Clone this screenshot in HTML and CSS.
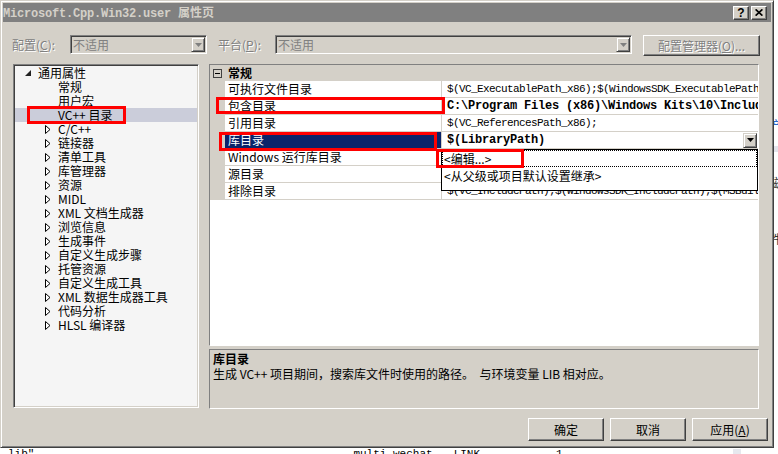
FILE: index.html
```html
<!DOCTYPE html>
<html lang="zh-CN">
<head>
  <meta charset="UTF-8">
  <title>Microsoft.Cpp.Win32.user 属性页</title>
  <link rel="stylesheet" href="styles.css">
</head>
<body>
  <div class="screen">
    <div class="dialog">
      <div class="titlebar">
        <span class="title"><span class="mono-b">Microsoft.Cpp.Win32.user </span>属性页</span>
        <span class="caption-btns">
          <span class="cbtn">?</span>
          <span class="cbtn">
            <svg width="8" height="7" viewBox="0 0 8 7"><path d="M0.6 0.3 L7.4 6.7 M7.4 0.3 L0.6 6.7" stroke="#000" stroke-width="1.6"/></svg>
          </span>
        </span>
      </div>

      <div class="toolbar">
        <span class="lbl lbl-cfg">配置(<u>C</u>):</span>
        <div class="combo combo-cfg">
          <span class="combo-text">不适用</span>
          <span class="drop"><svg width="7" height="4" viewBox="0 0 7 4"><path d="M0 0h7L3.5 4z" fill="#808080"/></svg></span>
        </div>
        <span class="lbl lbl-plat">平台(<u>P</u>):</span>
        <div class="combo combo-plat">
          <span class="combo-text">不适用</span>
          <span class="drop"><svg width="7" height="4" viewBox="0 0 7 4"><path d="M0 0h7L3.5 4z" fill="#808080"/></svg></span>
        </div>
        <span class="btn btn-mgr">配置管理器(<u>O</u>)...</span>
      </div>

      <div class="main">
        <div class="tree">
          <div class="node l0"><span class="tw"><svg width="6" height="6" viewBox="0 0 6 6"><path d="M6 0V6H0z" fill="#222"/></svg></span>通用属性</div>
          <div class="node l1"><span class="tw"></span>常规</div>
          <div class="node l1"><span class="tw"></span>用户宏</div>
          <div class="node l1 sel"><span class="tw"></span>VC++ 目录</div>
          <div class="node l1"><span class="tw"><svg width="6" height="9" viewBox="0 0 6 9"><path d="M0.5 0.5L5 4.5L0.5 8.5z" fill="#fff" stroke="#000"/></svg></span>C/C++</div>
          <div class="node l1"><span class="tw"><svg width="6" height="9" viewBox="0 0 6 9"><path d="M0.5 0.5L5 4.5L0.5 8.5z" fill="#fff" stroke="#000"/></svg></span>链接器</div>
          <div class="node l1"><span class="tw"><svg width="6" height="9" viewBox="0 0 6 9"><path d="M0.5 0.5L5 4.5L0.5 8.5z" fill="#fff" stroke="#000"/></svg></span>清单工具</div>
          <div class="node l1"><span class="tw"><svg width="6" height="9" viewBox="0 0 6 9"><path d="M0.5 0.5L5 4.5L0.5 8.5z" fill="#fff" stroke="#000"/></svg></span>库管理器</div>
          <div class="node l1"><span class="tw"><svg width="6" height="9" viewBox="0 0 6 9"><path d="M0.5 0.5L5 4.5L0.5 8.5z" fill="#fff" stroke="#000"/></svg></span>资源</div>
          <div class="node l1"><span class="tw"><svg width="6" height="9" viewBox="0 0 6 9"><path d="M0.5 0.5L5 4.5L0.5 8.5z" fill="#fff" stroke="#000"/></svg></span>MIDL</div>
          <div class="node l1"><span class="tw"><svg width="6" height="9" viewBox="0 0 6 9"><path d="M0.5 0.5L5 4.5L0.5 8.5z" fill="#fff" stroke="#000"/></svg></span>XML 文档生成器</div>
          <div class="node l1"><span class="tw"><svg width="6" height="9" viewBox="0 0 6 9"><path d="M0.5 0.5L5 4.5L0.5 8.5z" fill="#fff" stroke="#000"/></svg></span>浏览信息</div>
          <div class="node l1"><span class="tw"><svg width="6" height="9" viewBox="0 0 6 9"><path d="M0.5 0.5L5 4.5L0.5 8.5z" fill="#fff" stroke="#000"/></svg></span>生成事件</div>
          <div class="node l1"><span class="tw"><svg width="6" height="9" viewBox="0 0 6 9"><path d="M0.5 0.5L5 4.5L0.5 8.5z" fill="#fff" stroke="#000"/></svg></span>自定义生成步骤</div>
          <div class="node l1"><span class="tw"><svg width="6" height="9" viewBox="0 0 6 9"><path d="M0.5 0.5L5 4.5L0.5 8.5z" fill="#fff" stroke="#000"/></svg></span>托管资源</div>
          <div class="node l1"><span class="tw"><svg width="6" height="9" viewBox="0 0 6 9"><path d="M0.5 0.5L5 4.5L0.5 8.5z" fill="#fff" stroke="#000"/></svg></span>自定义生成工具</div>
          <div class="node l1"><span class="tw"><svg width="6" height="9" viewBox="0 0 6 9"><path d="M0.5 0.5L5 4.5L0.5 8.5z" fill="#fff" stroke="#000"/></svg></span>XML 数据生成器工具</div>
          <div class="node l1"><span class="tw"><svg width="6" height="9" viewBox="0 0 6 9"><path d="M0.5 0.5L5 4.5L0.5 8.5z" fill="#fff" stroke="#000"/></svg></span>代码分析</div>
          <div class="node l1"><span class="tw"><svg width="6" height="9" viewBox="0 0 6 9"><path d="M0.5 0.5L5 4.5L0.5 8.5z" fill="#fff" stroke="#000"/></svg></span>HLSL 编译器</div>
        </div>

        <div class="right">
          <div class="grid">
            <div class="cat">
              <svg class="minus" width="9" height="9" viewBox="0 0 9 9"><rect x="0.5" y="0.5" width="8" height="8" fill="none" stroke="#404040"/><path d="M2 4.5h5" stroke="#000"/></svg>
              <b>常规</b>
            </div>
            <div class="prop"><span class="gut"></span><span class="pname">可执行文件目录</span><span class="pval"><span class="mono">$(VC_ExecutablePath_x86);$(WindowsSDK_ExecutablePath_x86);$(VS_ExecutablePath)</span></span></div>
            <div class="prop"><span class="gut"></span><span class="pname">包含目录</span><span class="pval"><span class="mono-b">C:\Program Files (x86)\Windows Kits\10\Include\10.0</span></span></div>
            <div class="prop"><span class="gut"></span><span class="pname">引用目录</span><span class="pval"><span class="mono">$(VC_ReferencesPath_x86);</span></span></div>
            <div class="prop sel"><span class="gut"></span><span class="pname">库目录</span><span class="pval"><span class="mono-b">$(LibraryPath)</span><span class="vdrop"><svg width="7" height="4" viewBox="0 0 7 4"><path d="M0 0h7L3.5 4z" fill="#000"/></svg></span></span></div>
            <div class="prop"><span class="gut"></span><span class="pname">Windows 运行库目录</span><span class="pval"></span></div>
            <div class="prop"><span class="gut"></span><span class="pname">源目录</span><span class="pval"></span></div>
            <div class="prop"><span class="gut"></span><span class="pname">排除目录</span><span class="pval"><span class="mono">$(VC_IncludePath);$(WindowsSDK_IncludePath);$(MSBuild_ExecutablePath)</span></span></div>

            <div class="dropdown">
              <div class="opt focus">&lt;编辑...&gt;</div>
              <div class="opt">&lt;从父级或项目默认设置继承&gt;</div>
            </div>
          </div>

          <div class="desc">
            <div class="desc-title">库目录</div>
            <div class="desc-text">生成 VC++ 项目期间，搜索库文件时使用的路径。  与环境变量 LIB 相对应。</div>
          </div>
        </div>
      </div>

      <div class="buttons">
        <span class="btn">确定</span>
        <span class="btn">取消</span>
        <span class="btn">应用(<u>A</u>)</span>
      </div>
    </div>

    <div class="side">
      <span class="frag blue">产</span>
      <span class="frag band"></span>
      <span class="frag dark">磁</span>
      <span class="frag dark">I</span>
      <span class="frag dark">件</span>
    </div>
  </div>

  <div class="strip">
    <span class="s1">lib"</span>
    <span class="s2">multi_wechat</span>
    <span class="s3">LINK</span>
    <span class="s4">1</span>
    <span class="s5"></span>
  </div>

  <!-- red annotation boxes -->
  <div class="mark m1"></div>
  <div class="mark m2"></div>
  <div class="mark m3"></div>
  <div class="mark m4"></div>
</body>
</html>
```

FILE: styles.css
```css
* {
  box-sizing: border-box;
}

body {
  margin: 0;
  width: 778px;
  height: 454px;
  overflow: hidden;
  background: #ffffff;
  font-family: "Noto Sans CJK SC", "Liberation Sans", sans-serif;
  font-size: 12px;
  line-height: 14px;
  color: #000000;
}

.mono {
  font-family: "Liberation Mono", "Noto Sans CJK SC", monospace;
  font-size: 11px;
  letter-spacing: -0.6px;
}

.mono-b {
  font-family: "Liberation Mono", "Noto Sans CJK SC", monospace;
  font-size: 12px;
  font-weight: bold;
  letter-spacing: -0.2px;
}

.screen {
  display: flex;
  height: 448px;
}

/* dialog frame */
.dialog {
  width: 774px;
  height: 448px;
  flex: none;
  background: #d4d0c8;
  border: 1px solid;
  border-color: #d4d0c8 #404040 #404040 #d4d0c8;
  box-shadow: inset 1px 1px #ffffff, inset -1px -1px #808080;
  padding: 2px;
  display: flex;
  flex-direction: column;
}

.titlebar {
  height: 19px;
  flex: none;
  background: #808080;
  display: flex;
  align-items: center;
  justify-content: space-between;
  padding-right: 4px;
  color: #d4d0c8;
  font-weight: bold;
  white-space: nowrap;
}

.caption-btns {
  display: flex;
  gap: 2px;
}

.cbtn {
  width: 16px;
  height: 14px;
  background: #d4d0c8;
  border: 1px solid;
  border-color: #ffffff #404040 #404040 #ffffff;
  box-shadow: inset -1px -1px #808080;
  display: flex;
  align-items: center;
  justify-content: center;
  color: #000000;
  font-family: "Liberation Sans", sans-serif;
  font-size: 12px;
  font-weight: bold;
  line-height: 12px;
}

/* configuration row */
.toolbar {
  display: flex;
  align-items: flex-start;
  height: 21px;
  margin-top: 13px;
  padding-left: 9px;
  flex: none;
}

.lbl {
  color: #808080;
  text-shadow: 1px 1px #ffffff;
  line-height: 19px;
  white-space: nowrap;
}

.lbl-cfg {
  width: 58px;
}

.lbl-plat {
  width: 57px;
  margin-left: 11px;
}

.combo {
  height: 19px;
  padding: 1px;
  border: 1px solid;
  border-color: #808080 #ffffff #ffffff #808080;
  box-shadow: inset 1px 1px #404040, inset -1px -1px #d4d0c8;
  display: flex;
  align-items: center;
  justify-content: space-between;
  color: #808080;
}

.combo-text {
  padding-left: 1px;
  line-height: 15px;
}

.combo-cfg {
  width: 137px;
}

.combo-plat {
  width: 357px;
}

.drop,
.vdrop {
  width: 14px;
  height: 15px;
  background: #d4d0c8;
  border: 1px solid;
  border-color: #d4d0c8 #404040 #404040 #d4d0c8;
  box-shadow: inset 1px 1px #ffffff, inset -1px -1px #808080;
  display: flex;
  align-items: center;
  justify-content: center;
  flex: none;
}

.btn {
  width: 76px;
  height: 23px;
  background: #d4d0c8;
  border: 1px solid;
  border-color: #ffffff #404040 #404040 #ffffff;
  box-shadow: inset -1px -1px #808080;
  display: flex;
  align-items: center;
  justify-content: center;
  white-space: nowrap;
}

.btn-mgr {
  width: 117px;
  height: 21px;
  margin-left: 11px;
  color: #808080;
  text-shadow: 1px 1px #ffffff;
}

/* tree + grid */
.main {
  display: flex;
  gap: 10px;
  margin-top: 8px;
  padding-left: 10px;
  height: 345px;
  flex: none;
}

.tree {
  width: 186px;
  height: 344px;
  background: #f5f5f5;
  border: 1px solid;
  border-color: #808080 #ffffff #ffffff #808080;
  box-shadow: inset 1px 1px #404040, inset -1px -1px #d4d0c8;
  padding: 1px;
}

.node {
  height: 14px;
  line-height: 14px;
  display: flex;
  align-items: center;
  white-space: nowrap;
}

.node.l0 {
  padding-left: 10px;
}

.node.l1 {
  padding-left: 30px;
}

.node.sel {
  background: #cbcdda;
}

.tw {
  width: 13px;
  flex: none;
  display: flex;
  align-items: center;
}

.right {
  width: 550px;
  display: flex;
  flex-direction: column;
  gap: 3px;
}

.grid {
  position: relative;
  height: 282px;
  background: #ffffff;
  border: 1px solid;
  border-color: #808080 #ffffff #ffffff #808080;
}

.cat {
  height: 16px;
  background: #d4d0c8;
  display: flex;
  align-items: center;
  padding-left: 3px;
}

.cat b {
  margin-left: 6px;
}

.prop {
  display: flex;
  height: 17px;
  border-bottom: 1px solid #d4d0c8;
}

.gut {
  width: 15px;
  flex: none;
  background: #d4d0c8;
}

.pname {
  width: 217px;
  flex: none;
  padding-left: 3px;
  line-height: 16px;
  border-right: 1px solid #d4d0c8;
  white-space: nowrap;
  overflow: hidden;
}

.pval {
  flex: 1;
  min-width: 0;
  padding-left: 5px;
  line-height: 16px;
  white-space: nowrap;
  overflow: hidden;
  display: flex;
  align-items: center;
  justify-content: space-between;
}

.prop.sel .pname {
  background: #0a246a;
  color: #ffffff;
}

.prop.sel .vdrop {
  margin-right: 1px;
}

.dropdown {
  position: absolute;
  left: 231px;
  top: 84px;
  width: 317px;
  height: 42px;
  background: #ffffff;
  border: 1px solid #000000;
}

.opt {
  height: 17px;
  line-height: 17px;
  padding-left: 2px;
  white-space: nowrap;
}

.opt.focus {
  outline: 1px dotted #000000;
  outline-offset: -1px;
}

.desc {
  height: 60px;
  border: 1px solid;
  border-color: #808080 #ffffff #ffffff #808080;
  padding: 1px 3px 0;
  line-height: 15px;
}

.desc-title {
  font-weight: bold;
}

.desc-text {
  white-space: pre;
}

.buttons {
  display: flex;
  justify-content: flex-end;
  gap: 6px;
  margin-top: 9px;
  padding-right: 3px;
}

/* neighbouring windows */
.side {
  flex: 1;
  background: #ffffff;
  display: flex;
  flex-direction: column;
  overflow: hidden;
  padding-top: 118px;
  font-size: 12px;
  line-height: 14px;
}

.frag {
  display: block;
  margin-left: -4px;
  white-space: nowrap;
}

.frag.blue {
  color: #2a6ad0;
}

.frag.band {
  height: 6px;
  margin: 14px 0 10px;
  background: #e4e4ec;
}

.frag.dark {
  color: #333333;
  margin-top: 14px;
}

.strip {
  height: 6px;
  overflow: hidden;
  display: flex;
  font-family: "Liberation Mono", monospace;
  font-size: 11px;
  line-height: 11px;
  white-space: nowrap;
}

.strip span {
  margin-top: 1px;
}

.s1 {
  margin-left: 8px;
}

.s2 {
  margin-left: 319px;
}

.s3 {
  margin-left: 21px;
}

.s4 {
  margin-left: 76px;
}

.s5 {
  width: 8px;
  height: 6px;
  margin-left: 170px;
  background: #e6e8ee;
}

.mark {
  position: absolute;
  border: 3px solid #ff0000;
}

.m1 {
  left: 27px;
  top: 106px;
  width: 99px;
  height: 18px;
}

.m2 {
  left: 216px;
  top: 97px;
  width: 229px;
  height: 17px;
}

.m3 {
  left: 219px;
  top: 132px;
  width: 218px;
  height: 19px;
}

.m4 {
  left: 436px;
  top: 149px;
  width: 88px;
  height: 19px;
}
```
